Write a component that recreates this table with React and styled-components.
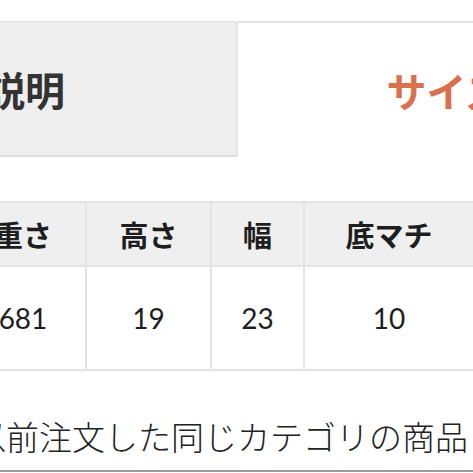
import React from 'react';
import styled, {createGlobalStyle} from 'styled-components';

const GlobalStyle = createGlobalStyle`
  html, body {
    margin: 0;
    padding: 0;
    background: #fff;
  }
  * {
    box-sizing: border-box;
  }
`;

const tabs = [
  {label: '商品説明', width: 504, active: false},
  {label: 'サイズ表記', width: 500, active: true},
];

const headers = ['重さ', '高さ', '幅', '底マチ'];
const values = ['681', '19', '23', '10'];
const colWidths = [126, 125, 93, 170];

function App() {
  return (
    <>
      <GlobalStyle />
      <Page>
        <TabBar>
          {tabs.map(tab => (
            <Tab key={tab.label} $active={tab.active} $w={tab.width}>
              {tab.label}
            </Tab>
          ))}
        </TabBar>
        <SpecTable $cols={colWidths.map(w => `${w}px`).join(' ')}>
          {headers.map(h => (
            <HeadCell key={h}>{h}</HeadCell>
          ))}
          {values.map((v, i) => (
            <ValueCell key={i}>{v}</ValueCell>
          ))}
        </SpecTable>
        <Note>以前注文した同じカテゴリの商品</Note>
      </Page>
    </>
  );
}

const Page = styled.div`
  width: 473px;
  height: 473px;
  overflow: hidden;
  background: #fff;
  font-family: 'Noto Sans CJK JP', 'Noto Sans', sans-serif;
`;

const TabBar = styled.div`
  display: flex;
  margin-left: -267px;
  padding-top: 21px;
  height: 157px;
`;

const Tab = styled.div`
  flex: 0 0 ${p => p.$w}px;
  height: 136px;
  display: flex;
  align-items: center;
  justify-content: center;
  font-size: 40px;
  font-weight: 700;
  color: ${p => (p.$active ? '#d9714e' : '#333')};
  background: ${p => (p.$active ? '#fff' : '#efefef')};
  border: ${p => (p.$active ? '2px solid #e3e3e3' : '1px solid #dcdcdc')};
  border-bottom: ${p => (p.$active ? 'none' : '2px solid #dcdcdc')};
  border-radius: 3px 3px ${p => (p.$active ? '0 0' : '3px 3px')};
  margin-left: ${p => (p.$active ? '-1px' : '0')};
  white-space: nowrap;
`;

const SpecTable = styled.div`
  display: grid;
  grid-template-columns: ${p => p.$cols};
  grid-template-rows: 64px 104px;
  margin-top: 44px;
  margin-left: -39px;
  border-top: 2px solid #e3e3e3;
`;

const Cell = styled.div`
  display: flex;
  align-items: center;
  justify-content: center;
  border-right: 2px solid #e3e3e3;
  border-bottom: 2px solid #e3e3e3;
  color: #1e1e1e;
`;

const HeadCell = styled(Cell)`
  background: #efefef;
  font-size: 29px;
  font-weight: 700;
`;

const ValueCell = styled(Cell)`
  background: #fff;
  font-family: Lato, 'Liberation Sans', sans-serif;
  font-size: 28px;
`;

const Note = styled.div`
  margin-top: 49px;
  margin-left: -27px;
  padding-bottom: 17px;
  font-size: 33px;
  line-height: 33px;
  font-weight: 300;
  color: #222;
  white-space: nowrap;
  border-bottom: 2px solid #9a9a9a;
`;

export default App;
